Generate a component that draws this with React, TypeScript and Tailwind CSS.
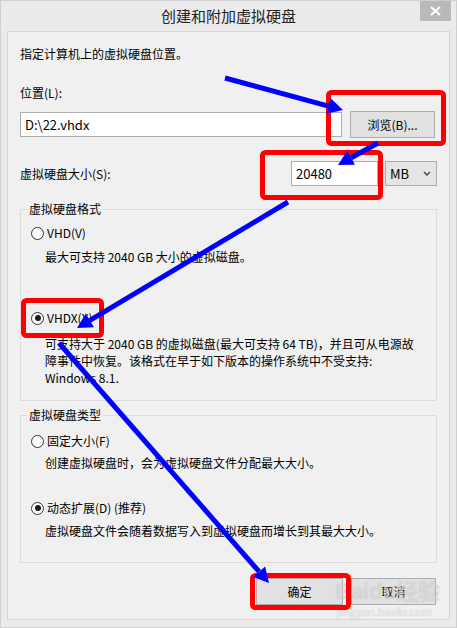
import type { FC, ReactNode } from "react";

const font = { fontFamily: '"Noto Sans CJK SC", "Noto Sans", sans-serif' };

const Radio: FC<{ checked?: boolean; children: ReactNode }> = ({ checked, children }) => {
  return (
    <div className="flex h-4 items-center gap-[3px] pl-[10px]">
      <span className="flex size-[13px] items-center justify-center rounded-full border border-[#333] bg-white">
        {checked && <span className="size-[6px] rounded-full bg-[#1a1a1a]" />}
      </span>
      <span className="leading-4">{children}</span>
    </div>
  );
};

type Pt = [number, number];

const Arrow: FC<{ from: Pt; to: Pt }> = ({ from, to }) => {
  const dx = to[0] - from[0];
  const dy = to[1] - from[1];
  const len = Math.hypot(dx, dy);
  const ux = dx / len;
  const uy = dy / len;
  const bx = to[0] - ux * 15;
  const by = to[1] - uy * 15;
  const px = -uy * 8;
  const py = ux * 8;
  return (
    <g>
      <line x1={from[0]} y1={from[1]} x2={bx} y2={by} stroke="#0000ff" strokeWidth={5} />
      <polygon
        points={`${to[0]},${to[1]} ${bx + px},${by + py} ${bx - px},${by - py}`}
        fill="#0000ff"
      />
    </g>
  );
};

const App: FC = () => {
  return (
    <div
      className="relative flex h-[628px] w-[457px] flex-col overflow-hidden border border-[#cfcfcf] bg-[#ebebeb] text-[12px] text-black"
      style={font}
    >
      {/* title bar */}
      <div className="relative flex h-[30px] shrink-0 items-center justify-center">
        <span className="text-[15px] text-[#222]">创建和附加虚拟硬盘</span>
        <button className="absolute right-[5px] top-0 flex h-[20px] w-[31px] items-center justify-center bg-[#b9b9b9]">
          <svg width="11" height="10" viewBox="0 0 11 10">
            <path d="M1 1 L10 9 M10 1 L1 9" stroke="#fff" strokeWidth="2.2" />
          </svg>
        </button>
      </div>

      {/* panel */}
      <div className="mx-[6px] mb-[7px] flex flex-1 flex-col border border-[#d6d6d6] bg-[#f0f0f0] px-3 pt-[14px]">
        <div className="h-4 leading-4">指定计算机上的虚拟硬盘位置。</div>

        <div className="mt-[23px] h-4 leading-4">位置(L):</div>

        <div className="mt-[10px] flex h-[27px] items-center gap-2">
          <div className="flex h-[25px] w-[322px] items-center border border-[#adadad] bg-white px-[4px] text-[13px]">
            D:\22.vhdx
          </div>
          <button className="h-[27px] w-[85px] border border-[#adadad] bg-[#e1e1e1] text-[12px]">
            浏览(B)...
          </button>
        </div>

        <div className="mt-[23px] flex h-[25px] items-center">
          <span className="flex-1">虚拟硬盘大小(S):</span>
          <div className="flex h-[25px] w-[87px] items-center border border-[#7eb4ea] bg-white px-[4px] text-[13px]">
            20480
          </div>
          <div className="ml-[7px] flex h-[25px] w-[52px] items-center justify-between border border-[#acacac] bg-[#e5e5e5] pl-[4px] pr-[5px] text-[13px]">
            <span>MB</span>
            <svg width="8" height="6" viewBox="0 0 8 6">
              <path d="M1 1 L4 4 L7 1" stroke="#444" strokeWidth="1.4" fill="none" />
            </svg>
          </div>
        </div>

        <fieldset className="mt-[15px] border border-[#dcdcdc] pb-[14px]">
          <legend className="ml-[6px] px-[2px] leading-4">虚拟硬盘格式</legend>
          <div className="mt-2">
            <Radio>VHD(V)</Radio>
          </div>
          <div className="mt-2 pl-6 leading-4">最大可支持 2040 GB 大小的虚拟磁盘。</div>
          <div className="mt-[45px]">
            <Radio checked>VHDX(X)</Radio>
          </div>
          <div className="mt-[9px] whitespace-nowrap pl-6 leading-[17px]">
            可支持大于 2040 GB 的虚拟磁盘(最大可支持 64 TB)，并且可从电源故
            <br />
            障事件中恢复。该格式在早于如下版本的操作系统中不受支持:
            <br />
            Windows 8.1.
          </div>
        </fieldset>

        <fieldset className="mt-[6px] border border-[#dcdcdc] pb-[23px]">
          <legend className="ml-[6px] px-[2px] leading-4">虚拟硬盘类型</legend>
          <div className="mt-[10px]">
            <Radio>固定大小(F)</Radio>
          </div>
          <div className="mt-[6px] pl-6 leading-4">创建虚拟硬盘时，会为虚拟硬盘文件分配最大大小。</div>
          <div className="mt-[29px]">
            <Radio checked>动态扩展(D) (推荐)</Radio>
          </div>
          <div className="mt-[7px] pl-6 leading-4">虚拟硬盘文件会随着数据写入到虚拟硬盘而增长到其最大大小。</div>
        </fieldset>

        <div className="mt-[15px] flex justify-end gap-2 pr-[1px]">
          <button className="h-[27px] w-[87px] border border-[#adadad] bg-[#e1e1e1]">确定</button>
          <button className="h-[27px] w-[85px] border border-[#adadad] bg-[#e1e1e1]">取消</button>
        </div>
      </div>

      {/* watermark */}
      <div className="pointer-events-none absolute left-[334px] top-[580px] flex flex-col items-start leading-none">
        <span
          className="text-[22px] font-bold text-white/40"
          style={{ fontFamily: '"Liberation Sans", "Noto Sans CJK SC", sans-serif', textShadow: "0 0 1px rgba(150,150,150,0.5)" }}
        >
          Baidu经验
        </span>
        <span
          className="ml-[2px] mt-[3px] text-[11px] text-white/50"
          style={{ textShadow: "0 0 1px rgba(150,150,150,0.5)" }}
        >
          jingyan.baidu.com
        </span>
      </div>

      {/* annotations */}
      <svg className="pointer-events-none absolute left-0 top-0" width="457" height="628" viewBox="0 0 457 628">
        <g fill="none" stroke="#ff0000" strokeWidth="5">
          <rect x="327.5" y="91.5" width="115" height="51" rx="3" />
          <rect x="261.5" y="151.5" width="118" height="45" rx="3" />
          <rect x="22.5" y="299.5" width="78" height="35" rx="3" />
          <rect x="251.5" y="574.5" width="96" height="32" rx="3" />
        </g>
        <Arrow from={[224, 77]} to={[342, 109]} />
        <Arrow from={[377, 142]} to={[337, 164]} />
        <Arrow from={[287, 201]} to={[76, 327]} />
        <Arrow from={[58, 342]} to={[268, 582]} />
      </svg>
    </div>
  );
};

export default App;
